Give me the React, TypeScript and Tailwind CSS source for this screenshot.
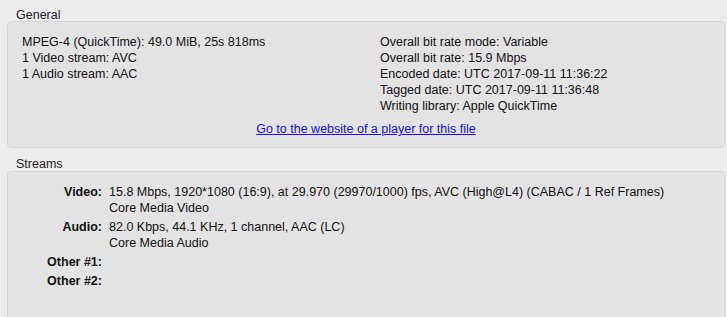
const general = {
  left: [
    'MPEG-4 (QuickTime): 49.0 MiB, 25s 818ms',
    '1 Video stream: AVC',
    '1 Audio stream: AAC',
  ],
  right: [
    'Overall bit rate mode: Variable',
    'Overall bit rate: 15.9 Mbps',
    'Encoded date: UTC 2017-09-11 11:36:22',
    'Tagged date: UTC 2017-09-11 11:36:48',
    'Writing library: Apple QuickTime',
  ],
};

const streams: { label: string; lines: string[] }[] = [
  {
    label: 'Video:',
    lines: [
      '15.8 Mbps, 1920*1080 (16:9), at 29.970 (29970/1000) fps, AVC (High@L4) (CABAC / 1 Ref Frames)',
      'Core Media Video',
    ],
  },
  {
    label: 'Audio:',
    lines: ['82.0 Kbps, 44.1 KHz, 1 channel, AAC (LC)', 'Core Media Audio'],
  },
  { label: 'Other #1:', lines: [] },
  { label: 'Other #2:', lines: [] },
];

export default function App() {
  return (
    <div className="w-[727px] h-[317px] overflow-hidden bg-[#ececec] text-[12.5px] leading-4 text-[#111] font-['Liberation_Sans',Arial,sans-serif]">
      <div className="h-[21px] pt-[7px] pl-4 text-[#222]">General</div>
      <div className="ml-[7px] w-[718px] h-[127px] rounded-[4px] border border-[#d5d5d5] bg-[#e3e3e3] pt-3">
        <div className="flex">
          <div className="w-[358px] pl-[14px]">
            {general.left.map((t) => (
              <div key={t}>{t}</div>
            ))}
          </div>
          <div className="pl-[14px]">
            {general.right.map((t) => (
              <div key={t}>{t}</div>
            ))}
          </div>
        </div>
        <div className="mt-[7px] text-center">
          <a href="#" className="text-[#1a0dff] underline">
            Go to the website of a player for this file
          </a>
        </div>
      </div>
      <div className="h-[23px] pt-[8px] pl-4 text-[#222]">Streams</div>
      <div className="ml-[7px] w-[718px] h-[160px] rounded-[4px] border border-[#d5d5d5] bg-[#e3e3e3] pt-3">
        <div className="flex flex-col gap-[3px]">
          {streams.map((s) => (
            <div key={s.label} className="flex">
              <div className="w-[94px] shrink-0 text-right font-bold">{s.label}</div>
              <div className="pl-[7px]">
                {s.lines.map((l) => (
                  <div key={l} className="whitespace-nowrap">{l}</div>
                ))}
              </div>
            </div>
          ))}
        </div>
      </div>
    </div>
  );
}
